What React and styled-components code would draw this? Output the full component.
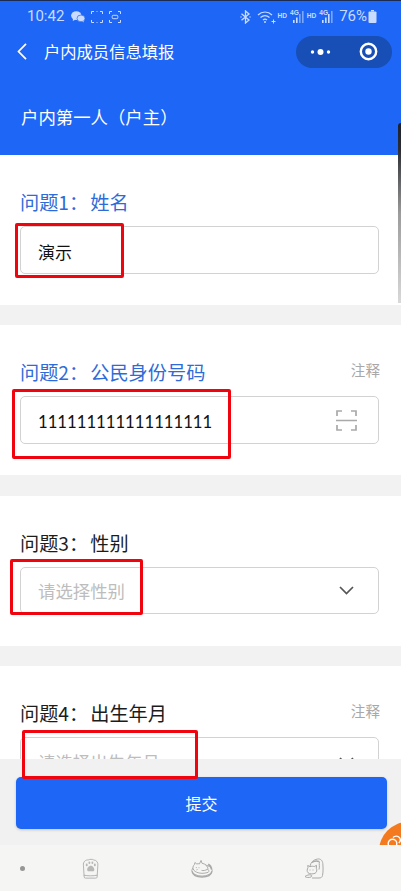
import React from "react";
import styled, { createGlobalStyle } from "styled-components";

const CJK = `"Noto Sans CJK SC", "Noto Sans", sans-serif`;

const Global = createGlobalStyle`
  html, body { margin: 0; padding: 0; background: #fff; }
  * { box-sizing: border-box; }
`;

const Page = styled.div`
  position: relative;
  width: 401px;
  height: 891px;
  overflow: hidden;
  background: #f2f2f2;
  font-family: ${CJK};
`;

const Header = styled.header`
  height: 155px;
  background: #1d66f6;
  border-top: 1.5px solid #1b2b52;
  color: #fff;
`;

const StatusBar = styled.div`
  height: 31.5px;
  display: flex;
  align-items: center;
  padding: 0 24px 0 27px;
  color: #c9dcff;
`;

const Clock = styled.span`
  font: 400 15px/1 Roboto, sans-serif;
  margin-right: 7px;
`;

const StatusLeft = styled.div`
  display: flex;
  align-items: center;
  gap: 6px;
`;

const StatusRight = styled.div`
  margin-left: auto;
  display: flex;
  align-items: center;
`;

const Percent = styled.span`
  font: 400 15px/1 Roboto, sans-serif;
  margin: 0 1px 0 6px;
`;

const NetWrap = styled.span`
  display: inline-flex;
  align-items: center;
  margin-left: ${p => p.$gap}px;
`;

const Hd = styled.span`
  font: 700 6.6px/1 "Liberation Sans", sans-serif;
  margin-right: 3px;
`;

const Net = styled.span`
  font: 700 6.6px/1 "Liberation Sans", sans-serif;
  align-self: flex-start;
  margin-right: -6px;
`;

const NavBar = styled.nav`
  height: 38px;
  display: flex;
  align-items: center;
  padding: 0 9px 0 17px;
`;

const NavTitle = styled.h1`
  margin: 0 0 0 17px;
  font: 400 16.3px/1 ${CJK};
  color: #fff;
`;

const Capsule = styled.div`
  margin-left: auto;
  width: 96px;
  height: 32px;
  border-radius: 16px;
  background: #174fb6;
  display: flex;
  align-items: center;
  justify-content: space-between;
  padding: 0 14px 0 14px;
`;

const SectionTitle = styled.h2`
  margin: 34px 0 0;
  padding-left: 21px;
  font: 400 17.4px/24px ${CJK};
  color: #fff;
  white-space: nowrap;
`;

const EdgeHandle = styled.div`
  position: absolute;
  top: 123px;
  right: 0;
  width: 3px;
  height: 180px;
  border-radius: 3px 0 0 0;
  background: linear-gradient(#1b2230 0, #2a2d33 15%, #9b9b9b 50%, #d9d9d9 100%);
`;

const Cards = styled.main`
  display: flex;
  flex-direction: column;
  gap: 20.33px;
`;

const Card = styled.section`
  height: 150px;
  flex: none;
  background: #fff;
  padding: 36px 22px 0 20px;
`;

const LabelRow = styled.div`
  display: flex;
  justify-content: space-between;
  height: 35px;
`;

const Label = styled.div`
  font: 400 19.2px/23px ${CJK};
  color: ${p => (p.$active ? "#2d6cd8" : "#1c1c1c")};
  white-space: nowrap;
`;

const Colon = styled.span`
  margin-right: 2px;
`;

const Note = styled.span`
  font: 400 14.6px/20px ${CJK};
  color: #a8a8a8;
  margin-top: -1px;
  margin-right: -1px;
`;

const Field = styled.div`
  position: relative;
  width: 359px;
  height: 47.5px;
  border: 1px solid #d2d2d2;
  border-radius: 5px;
  background: #fff;
  display: flex;
  align-items: center;
  justify-content: space-between;
  padding: 1px 21px 0 17px;
`;

const Value = styled.span`
  font: 400 ${p => (p.$digits ? "16.7px" : "17px")}/1 ${p => (p.$digits ? `Lato, sans-serif` : CJK)};
  color: #111;
  padding-top: ${p => (p.$digits ? "3px" : "2px")};
`;

const Placeholder = styled.span`
  font: 400 17.4px/1 ${CJK};
  color: #bdbdbd;
`;

const Annotation = styled.div`
  position: absolute;
  z-index: 5;
  left: ${p => p.$x}px;
  top: ${p => p.$y}px;
  width: ${p => p.$w}px;
  height: ${p => p.$h}px;
  border: 3px solid #f0050f;
  border-radius: 2px;
  pointer-events: none;
`;

const Footer = styled.footer`
  position: absolute;
  left: 0;
  right: 0;
  bottom: 0;
  height: 132px;
  display: flex;
  flex-direction: column;
  background: #f1f1f1;
  z-index: 2;
`;

const ButtonArea = styled.div`
  position: relative;
  height: 86px;
  padding: 18px 14px 0 16px;
  overflow: hidden;
`;

const Submit = styled.button`
  display: block;
  width: 371px;
  height: 52px;
  border: 0;
  border-radius: 5px;
  background: #1d66f6;
  color: #fff;
  font: 400 16px/1 ${CJK};
  box-shadow: 0 1px 3px rgba(0, 0, 0, 0.18);
`;

const Bubble = styled.div`
  position: absolute;
  left: 379px;
  top: 63px;
  width: 58px;
  height: 58px;
  border-radius: 50%;
  background: #f47a1f;
  padding: 8px 0 0 8px;
`;

const TabBar = styled.div`
  height: 46px;
  background: #f5f5f4;
  display: flex;
  align-items: center;
  padding-left: 20px;
`;

const TabDot = styled.span`
  width: 5px;
  height: 5px;
  border-radius: 50%;
  background: #969696;
  margin-right: ${p => p.$mr}px;
`;

const TabIcon = styled.svg`
  flex: none;
  margin-right: ${p => p.$mr || 0}px;
  color: #a9a9a9;
`;

const ChevronSvg = styled.svg`
  margin-right: 3px;
`;

const Back = () => (
  <svg width="10" height="17" viewBox="0 0 10 17" fill="none" stroke="#fff" strokeWidth="1.7">
    <path d="M9 .8 1.5 8.5 9 16.2" />
  </svg>
);

const More = () => (
  <svg width="22" height="8" viewBox="0 0 22 8" fill="#fff">
    <circle cx="2.5" cy="4" r="1.7" />
    <circle cx="10.5" cy="4" r="3" />
    <circle cx="18.5" cy="4" r="1.7" />
  </svg>
);

const Target = () => (
  <svg width="19" height="19" viewBox="0 0 19 19" fill="none">
    <circle cx="9.5" cy="9.5" r="7.7" stroke="#fff" strokeWidth="2.4" />
    <circle cx="9.5" cy="9.5" r="3.2" fill="#fff" />
  </svg>
);

const WeChat = () => (
  <svg width="14" height="12" viewBox="0 0 14 12" fill="currentColor">
    <ellipse cx="5.3" cy="4.6" rx="5.2" ry="4.3" />
    <path d="M2 7.5 1.8 10 4.6 8.6Z" />
    <ellipse cx="10" cy="7.4" rx="4" ry="3.4" stroke="#1d66f6" strokeWidth=".7" />
    <path d="M11.5 10 12.6 11.7 12.4 9.6Z" />
  </svg>
);

const Corners = ({ inner }) => (
  <svg width="12" height="12" viewBox="0 0 12 12" fill="none" stroke="currentColor" strokeWidth="1">
    <path d="M.5 3V.5H3M9 .5h2.500V3M11.500 9v2.500H9M3 11.500H.5V9" />
    {inner ? <rect x="3.200" y="4.300" width="5.600" height="3.400" rx="1" /> : null}
    {!inner ? <path d="M5 .5h2M5 11.500h2" opacity=".45" /> : null}
  </svg>
);

const Bluetooth = () => (
  <svg width="11" height="14" viewBox="0 0 11 14" fill="none" stroke="currentColor" strokeWidth="1.300">
    <path d="M1.500 3.800 9 10 5.500 13V1L9 4 1.500 10.200" />
    <circle cx="1" cy="7" r=".7" fill="currentColor" stroke="none" />
    <circle cx="10" cy="7" r=".7" fill="currentColor" stroke="none" />
  </svg>
);

const Wifi = () => (
  <svg width="20" height="14" viewBox="0 0 20 14" fill="none" stroke="currentColor" strokeWidth="1.200">
    <path d="M1 5C5 1 11 1 15 5M3.500 7.500C6.500 5 9.500 5 12.500 7.500M6 10C7.300 9 8.700 9 10 10" />
    <circle cx="8" cy="12" r="1" fill="currentColor" stroke="none" />
    <path d="M16.500 9.500v4M14.500 11.500h4" strokeWidth="1" />
  </svg>
);

const Bars = ({ dim }) => (
  <svg width="11" height="13" viewBox="0 0 11 13" fill="currentColor">
    <rect x="0" y="10" width="1.600" height="3" />
    <rect x="3" y="7.500" width="1.600" height="5.500" />
    <rect x="6" y="4" width="1.600" height="9" opacity={dim ? 0.55 : 1} />
    <rect x="9" y="1" width="1.600" height="12" opacity=".55" />
  </svg>
);

const Battery = () => (
  <svg width="9" height="13" viewBox="0 0 9 13" fill="currentColor">
    <rect x="3" y="0" width="3" height="1.500" />
    <rect x="0.500" y="1.500" width="8" height="11.500" rx="1" />
  </svg>
);

const Scan = () => (
  <svg width="21" height="21" viewBox="0 0 21 21" fill="none" stroke="#a9a9a9" strokeWidth="1.700">
    <path d="M1 6V1h5M15 1h5v5M20 15v5h-5M6 20H1v-5M0 10.500h21" />
  </svg>
);

const Chevron = () => (
  <ChevronSvg width="15" height="9" viewBox="0 0 15 9" fill="none" stroke="#555" strokeWidth="1.700">
    <path d="M1 1 7.500 7.500 14 1" />
  </ChevronSvg>
);

const Rings = () => (
  <svg width="14" height="14" viewBox="0 0 14 14" fill="none" stroke="#fff" strokeWidth="1.400">
    <circle cx="5.500" cy="8.500" r="4.300" />
    <path d="M6 2.500C8 .5 11.500.8 12.800 3c1 2 .3 4-1 5" />
  </svg>
);

const PawIcon = () => (
  <TabIcon $mr={92} width="17" height="21" viewBox="0 0 18 21" fill="none" stroke="currentColor" strokeWidth=".9">
    <path d="M2.300 19.500 1.500 7C1 3.500 4 1 6.500 1.500 8 .5 11 .5 12.500 1.500 15 1.500 17.300 4 16.800 7L16 19.500c-.1 1-.6 1.200-1.500 1.200H3.800c-.9 0-1.400-.3-1.500-1.200Z" />
    <path d="M1.800 17.500c4 1 10.500 1 14.500 0" />
    <g fill="currentColor" stroke="none" opacity=".8">
      <ellipse cx="5" cy="6.700" rx="1" ry="1.400" />
      <ellipse cx="7.800" cy="4.400" rx="1" ry="1.400" />
      <ellipse cx="11" cy="4.400" rx="1" ry="1.400" />
      <ellipse cx="13.600" cy="6.700" rx="1" ry="1.400" />
      <path d="M9.300 7.500c2 0 4 2.500 3.700 4.500-.2 1.600-2 1.700-3.700 1.400-1.700.3-3.500.2-3.800-1.400C5.200 10 7.300 7.500 9.300 7.500Z" />
    </g>
  </TabIcon>
);

const BedIcon = () => (
  <TabIcon $mr={91} width="22" height="19" viewBox="0 0 23 20" fill="none" stroke="currentColor" strokeWidth="1">
    <ellipse cx="11.500" cy="12" rx="10.700" ry="6" />
    <path d="M1 13c1 4.500 4 6 10.500 6S21 17.500 22 13" strokeWidth="1.500" />
    <path d="M3 12c-1.800-2.500-1-5 .5-6l.5-2.300 2 1.500c1-.3 2-.3 2.800 0L10.500 1.500l1 3c3.500.5 6 3 6.500 6.500" fill="#f5f5f4" />
    <path d="M3 12c3 3 9 4 15 2 1.500-1 .5-2.800-1-3-2 1-4 1.500-6 1" fill="#f5f5f4" />
    <path d="M18 5.500c2 1 3.300 3 3.600 5.500" strokeWidth="1.800" />
    <path d="M5 9h1.200M7.700 9.200h1.200M5.500 11.500l1.500-.5" strokeWidth=".8" />
  </TabIcon>
);

const CatIcon = () => (
  <TabIcon width="20" height="21" viewBox="0 0 20 21" fill="none" stroke="currentColor" strokeWidth="1">
    <path d="M6 8C7 4 9.500 1.800 13.500 1c3-.5 5 1.500 5.300 4.500.4 5 .4 8.500-.3 12-.3 1.700-1.500 2.500-3.500 2.500H8" />
    <path d="M8 4.500C10 3 12.500 2.500 15 3.500" strokeWidth="1.400" />
    <path d="M15.500 3.500c-.8 3 .5 5-.5 8" />
    <path d="M4 9.500 3.700 7.500 6 8.700c1.500-.6 3-.6 4.200-.1l2.300-1.300-.2 3c1 2 .5 4-1.300 5-2.500 1-5.500.8-7-.6-1.200-1.300-1-3.300 0-5.200Z" fill="#f5f5f4" />
    <path d="M1 18.500c1.800-1.500 4-2 6-1.500 1 .4 1 1.500 0 2-2 .8-5 .6-6-.5Z" fill="#f5f5f4" />
    <path d="M5.500 12h1M8.500 12h1" strokeWidth=".9" />
  </TabIcon>
);

const questions = [
  { no: "问题1", rest: "姓名", active: true, value: "演示", box: [-6, -4.500, 109, 55] },
  { no: "问题2", rest: "公民身份号码", active: true, note: true, value: "111111111111111111", digits: true, icon: <Scan />, box: [-9, -8, 219, 70] },
  { no: "问题3", rest: "性别", placeholder: "请选择性别", icon: <Chevron />, box: [-11, -9, 133, 56] },
  { no: "问题4", rest: "出生年月", note: true, placeholder: "请选择出生年月", icon: <Chevron />, box: [0.500, -7.500, 176, 49] },
];

export default function App() {
  return (
    <Page>
      <Global />
      <Header>
        <StatusBar>
          <Clock>10:42</Clock>
          <StatusLeft>
            <WeChat />
            <Corners />
            <Corners inner />
          </StatusLeft>
          <StatusRight>
            <Bluetooth />
            <NetWrap $gap={6}><Wifi /></NetWrap>
            <NetWrap $gap={0}><Hd>HD</Hd><Net>4G</Net><Bars dim /></NetWrap>
            <NetWrap $gap={3}><Hd>HD</Hd><Net>4G</Net><Bars /></NetWrap>
            <Percent>76%</Percent>
            <Battery />
          </StatusRight>
        </StatusBar>
        <NavBar>
          <Back />
          <NavTitle>户内成员信息填报</NavTitle>
          <Capsule>
            <More />
            <Target />
          </Capsule>
        </NavBar>
        <SectionTitle>户内第一人（户主）</SectionTitle>
      </Header>
      <EdgeHandle />
      <Cards>
        {questions.map(q => (
          <Card key={q.no}>
            <LabelRow>
              <Label $active={q.active}>{q.no}<Colon>：</Colon>{q.rest}</Label>
              {q.note ? <Note>注释</Note> : null}
            </LabelRow>
            <Field>
              {q.value ? <Value $digits={q.digits}>{q.value}</Value> : <Placeholder>{q.placeholder}</Placeholder>}
              {q.icon}
              <Annotation $x={q.box[0]} $y={q.box[1]} $w={q.box[2]} $h={q.box[3]} />
            </Field>
          </Card>
        ))}
      </Cards>
      <Footer>
        <ButtonArea>
          <Submit>提交</Submit>
          <Bubble><Rings /></Bubble>
        </ButtonArea>
        <TabBar>
          <TabDot $mr={57} />
          <PawIcon />
          <BedIcon />
          <CatIcon />
        </TabBar>
      </Footer>
    </Page>
  );
}
